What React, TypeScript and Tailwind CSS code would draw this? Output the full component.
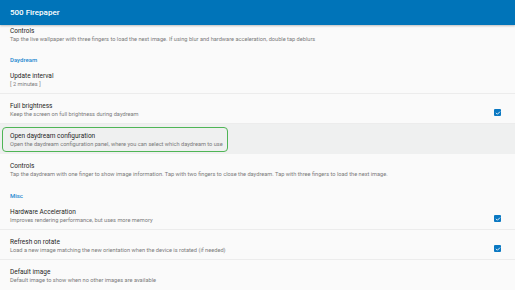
const rowTitle = "text-[6.5px] leading-[8px] text-[#262626]";
const rowDesc = "text-[5.65px] leading-[8px] text-[#7a7a7a] whitespace-nowrap";

function Check() {
  return (
    <div className="w-[7px] h-[7px] rounded-[1px] bg-[#0a78c2] flex items-center justify-center">
      <svg width="6" height="6" viewBox="0 0 24 24">
        <path d="M5 12.5l4.5 4.5L19 7.5" fill="none" stroke="#fff" strokeWidth="3.5" strokeLinecap="round" strokeLinejoin="round" />
      </svg>
    </div>
  );
}

function Pref({
  title,
  desc,
  checked,
  divider,
  className = "",
}: {
  title: string;
  desc: string;
  checked?: boolean;
  divider?: boolean;
  className?: string;
}) {
  return (
    <div
      className={`h-[30px] flex items-start pl-[10px] pr-[14px] pt-[8px] ${
        divider ? "border-b border-[#ececec]" : ""
      } ${className}`}
    >
      <div className="flex-1 min-w-0">
        <div className={rowTitle}>{title}</div>
        <div className={rowDesc}>{desc}</div>
      </div>
      {checked && (
        <div className="self-center">
          <Check />
        </div>
      )}
    </div>
  );
}

function Category({ label }: { label: string }) {
  return (
    <div className="h-[16px] pl-[10px] pt-[9px] text-[6px] leading-[6px] font-medium text-[#1a88d0]">
      {label}
    </div>
  );
}

export default function App() {
  return (
    <div
      className="w-[515px] h-[290px] overflow-hidden bg-[#fafafa]"
      style={{ fontFamily: "Roboto, 'Noto Sans', sans-serif" }}
    >
      <div className="relative z-10 h-[25px] bg-[#0074b9] flex items-center pl-[10px] shadow-[0_1px_2px_rgba(0,0,0,0.25)]">
        <span className="text-white text-[8px] font-medium">500 Firepaper</span>
      </div>

      <div className="h-[23px] pl-[10px] pt-[2px]">
        <div className={rowTitle}>Controls</div>
        <div className={rowDesc}>
          Tap the live wallpaper with three fingers to load the next image. If using blur and hardware acceleration, double tap deblurs
        </div>
      </div>

      <Category label="Daydream" />
      <Pref title="Update interval" desc="[ 2 minutes ]" divider />
      <Pref title="Full brightness" desc="Keep the screen on full brightness during daydream" checked divider />

      <div className="relative bg-[#eff0f0]">
        <Pref
          title="Open daydream configuration"
          desc="Open the daydream configuration panel, where you can select which daydream to use"
        />
        <div className="absolute left-[2px] top-[3px] w-[226px] h-[25px] rounded-[4px] border-[1.5px] border-[#4fb556]" />
      </div>

      <Pref
        title="Controls"
        desc="Tap the daydream with one finger to show image information. Tap with two fingers to close the daydream. Tap with three fingers to load the next image."
      />

      <Category label="Misc" />
      <Pref title="Hardware Acceleration" desc="Improves rendering performance, but uses more memory" checked divider />
      <Pref
        title="Refresh on rotate"
        desc="Load a new image matching the new orientation when the device is rotated (if needed)"
        checked
        divider
      />
      <Pref title="Default image" desc="Default image to show when no other images are available" />
    </div>
  );
}
